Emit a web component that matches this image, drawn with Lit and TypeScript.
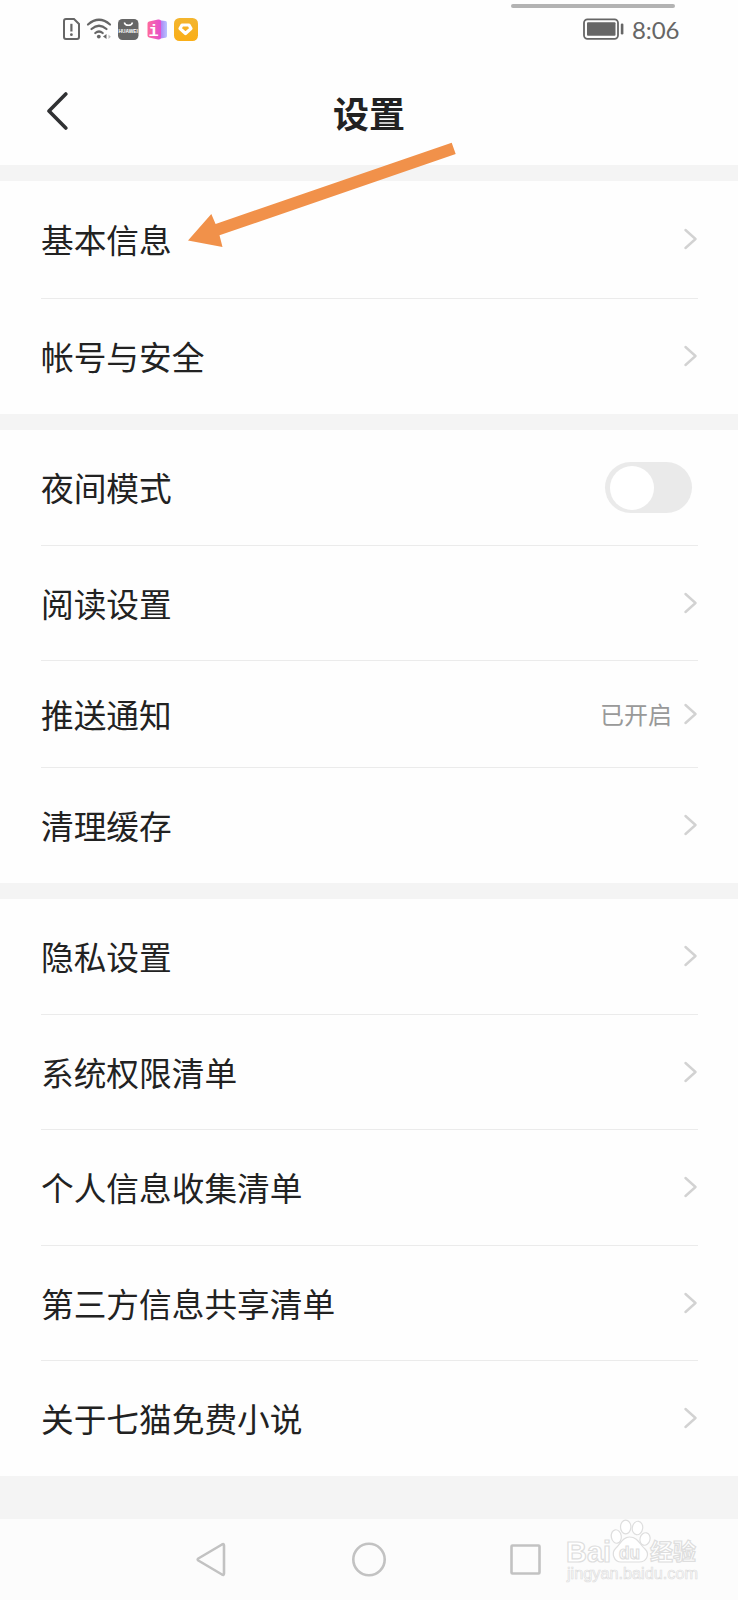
import { LitElement, html, css, nothing } from "lit";
import { customElement, property } from "lit/decorators.js";

@customElement("status-bar")
class StatusBar extends LitElement {
  static styles = css`
    :host { display: flex; justify-content: space-between; height: 60px; padding: 0 59px 0 62px; box-sizing: border-box; position: relative; }
    .handle { position: absolute; left: 511px; top: 4px; width: 164px; height: 4px; border-radius: 2px; background: #b3b3b3; }
    .icons { display: block; }
    .right { display: flex; gap: 8px; }
    .time { font: 400 24px/60px Lato, sans-serif; color: #666; width: 47px; white-space: nowrap; letter-spacing: -0.1px; }
    .brand { font: 700 5px "Liberation Sans", sans-serif; }
    .info { font: 700 17px "Liberation Mono", monospace; }
  `;
  render() {
    return html`
      <div class="handle"></div>
      <svg class="icons" width="140" height="60" viewBox="62 0 140 60">
        <defs>
          <linearGradient id="pink" x1="0" x2="1"><stop offset="0" stop-color="#ff6a9c" /><stop offset="1" stop-color="#e24fcf" /></linearGradient>
          <linearGradient id="violet" x1="0" x2="1"><stop offset="0" stop-color="#a45bef" /><stop offset="1" stop-color="#b7c5ff" /></linearGradient>
          <linearGradient id="gold" x1="0" x2="0" y1="0" y2="1"><stop offset="0" stop-color="#f3b52e" /><stop offset="1" stop-color="#faae17" /></linearGradient>
        </defs>
        <path d="M66 19H74L79 24V37a2 2 0 0 1-2 2H66a2 2 0 0 1-2-2V21a2 2 0 0 1 2-2Z" fill="none" stroke="#666" stroke-width="2" />
        <path d="M71.400 23.800V31.500" stroke="#666" stroke-width="2.200" />
        <circle cx="71.400" cy="34.700" r="1.400" fill="#666" />
        <g fill="none" stroke="#666" stroke-width="2.200" stroke-linecap="round">
          <path d="M88 24.500Q99 15 110 24.500" /><path d="M91.500 29Q99 22.500 106.500 29" /><path d="M95.300 33Q99 30 102.700 33" />
        </g>
        <circle cx="98.800" cy="36.600" r="1.900" fill="#666" />
        <path d="M106.500 34V39L103 36.500Z" fill="#666" /><path d="M108.500 34.500V39L110.800 36.700Z" fill="#bbb" />
        <rect x="118" y="19" width="20.500" height="21" rx="4.500" fill="#666" />
        <path d="M124.300 22.500a4.200 3.600 0 0 0 8.200 0" fill="none" stroke="#fff" stroke-width="1.500" />
        <text class="brand" x="118.600" y="33" textLength="19.300" lengthAdjust="spacingAndGlyphs" fill="#fff">HUAWEI</text>
        <path d="M157 20L165.500 21Q167 21.200 167 23V36Q167 37.500 165.500 37.700L157 39Z" fill="url(#violet)" />
        <path d="M149 21.500L158 19.500Q161 19 161 21.500V37.500Q161 40 158 39.500L149 37.500Q147.500 37.200 147.500 35.500V23.500Q147.500 22 149 21.500Z" fill="url(#pink)" />
        <text class="info" x="148.500" y="35.500" fill="#fff">i</text>
        <rect x="174" y="18" width="24" height="23" rx="5.500" fill="url(#gold)" />
        <path d="M182 25H189L191 28.500L185.500 33.500L180 28.500Z" fill="none" stroke="#fff" stroke-width="3.200" stroke-linejoin="round" />
      </svg>
      <div class="right">
        <svg width="41" height="60" viewBox="583.500 0 41 60">
          <rect x="584.500" y="19.300" width="34" height="19.500" rx="3.500" fill="none" stroke="#666" stroke-width="1.800" />
          <rect x="587.500" y="22.300" width="28.500" height="13.500" rx="1" fill="#666" />
          <rect x="621.300" y="23.500" width="2.600" height="11" rx="1.200" fill="#666" />
        </svg>
        <div class="time">8:06</div>
      </div>`;
  }
}

@customElement("setting-row")
class SettingRow extends LitElement {
  @property() label = "";
  @property() value = "";
  @property({ type: Boolean }) toggle = false;
  static styles = css`
    :host { display: flex; align-items: center; box-sizing: border-box; margin: 0 40px 0 41px; }
    .label { flex: 1; font-size: 32.7px; line-height: 48px; color: #222; padding-bottom: 1px; }
    .value { font-size: 24px; line-height: 36px; color: #999; margin-right: 12px; }
    .switch { width: 87px; height: 51px; border-radius: 26px; background: #eaeaea; margin-right: 6px; padding: 4px 5px; box-sizing: border-box; }
    .knob { width: 44px; height: 44px; border-radius: 50%; background: #fff; }
    .chevron { margin-right: 1px; padding-bottom: 1px; }
  `;
  render() {
    return html`
      <div class="label">${this.label}</div>
      ${this.value ? html`<div class="value">${this.value}</div>` : nothing}
      ${this.toggle
        ? html`<div class="switch"><div class="knob"></div></div>`
        : html`<svg class="chevron" width="13" height="22" viewBox="0 0 13 22"><path d="M1.500 2L11.500 11L1.500 20" fill="none" stroke="#d2d2d2" stroke-width="2.400" stroke-linecap="round" stroke-linejoin="round" /></svg>`}`;
  }
}

@customElement("nav-bar")
class NavBar extends LitElement {
  static styles = css`
    :host { display: flex; height: 81px; background: #fcfcfc; position: relative; }
    .mark { position: absolute; left: 560px; top: 0; }
    .latin { font: 700 29px "Liberation Sans", sans-serif; }
    .paw { font: 700 18px "Liberation Sans", sans-serif; }
    .han { font: 700 23px "Noto Sans CJK SC", sans-serif; }
    .url { font: 400 16px "Liberation Sans", sans-serif; }
  `;
  render() {
    return html`
      <svg width="738" height="81" viewBox="0 0 738 81" fill="none" stroke="#c2c2c2" stroke-width="2.600" stroke-linejoin="round">
        <path d="M198.300 39.500Q197 40.500 198.300 41.500L222 55.500Q224 56.500 224 54.500V26.500Q224 24.500 222 25.500Z" />
        <circle cx="369" cy="40.500" r="15.700" />
        <rect x="511.500" y="26.500" width="28" height="28" rx="1" />
      </svg>
      <svg class="mark" width="150" height="81" viewBox="560 0 150 81" fill="#fff" stroke="#dedede" stroke-width="1.200">
        <text class="latin" x="566" y="42.500" textLength="45" lengthAdjust="spacingAndGlyphs">Bai</text>
        <ellipse cx="616.300" cy="17.500" rx="5" ry="6.800" transform="rotate(-10 616.300 17.500)" />
        <ellipse cx="625.700" cy="8" rx="5.200" ry="6.800" />
        <ellipse cx="637.500" cy="9" rx="5.200" ry="6.800" transform="rotate(10 637.500 9)" />
        <ellipse cx="645" cy="20" rx="5" ry="6.300" transform="rotate(15 645 20)" />
        <path d="M629.500 18C622 18 620 26 615.500 29.500C611 34 614 43 621 43H639C647 43 650 35 645 30C640 26 638 18 629.500 18Z" />
        <text class="paw" x="619" y="40" textLength="21" lengthAdjust="spacingAndGlyphs">du</text>
        <text class="han" x="650" y="40.500" textLength="46" lengthAdjust="spacingAndGlyphs">经验</text>
        <text class="url" x="567" y="60" textLength="131" lengthAdjust="spacingAndGlyphs" stroke-width=".7">jingyan.baidu.com</text>
      </svg>`;
  }
}

interface Item { label: string; size: string; value?: string; toggle?: boolean }

const groups: Item[][] = [
  [{ label: "基本信息", size: "h118" }, { label: "帐号与安全", size: "h115" }],
  [
    { label: "夜间模式", size: "h116", toggle: true },
    { label: "阅读设置", size: "h115" },
    { label: "推送通知", size: "h107", value: "已开启" },
    { label: "清理缓存", size: "h115" },
  ],
  [
    { label: "隐私设置", size: "h116" },
    { label: "系统权限清单", size: "h115" },
    { label: "个人信息收集清单", size: "h116" },
    { label: "第三方信息共享清单", size: "h115" },
    { label: "关于七猫免费小说", size: "h115" },
  ],
];

@customElement("app-root")
class AppRoot extends LitElement {
  static styles = css`
    :host { display: flex; flex-direction: column; position: relative; width: 738px; height: 1600px; background: #f4f4f4; font-family: "Noto Sans CJK SC", sans-serif; overflow: hidden; }
    .top { background: #fefefe; height: 165px; flex: none; }
    .header { display: grid; grid-template-columns: 1fr auto 1fr; align-items: center; height: 105px; padding: 0 46px; }
    .back { display: block; padding-bottom: 3px; }
    .title { font-size: 36px; line-height: 54px; font-weight: 700; color: #222; padding-bottom: 1px; }
    .groups { display: flex; flex-direction: column; gap: 16px; padding-top: 16px; flex: 1; }
    .group { background: #fefefe; }
    .h107 { height: 107px; }
    .h115 { height: 115px; }
    .h116 { height: 116px; }
    .h118 { height: 118px; }
    .line { border-bottom: 1px solid #ebebeb; }
    .arrow { position: absolute; left: 180px; top: 135px; }
  `;
  render() {
    return html`
      <div class="top">
        <status-bar></status-bar>
        <div class="header">
          <svg class="back" width="23" height="38" viewBox="0 0 23 38"><path d="M19.800 2L3 19L19.800 36" fill="none" stroke="#303133" stroke-width="3.600" stroke-linecap="round" stroke-linejoin="round" /></svg>
          <div class="title">设置</div>
        </div>
      </div>
      <div class="groups">
        ${groups.map(
          (g) => html`<div class="group">
            ${g.map((i, n) => html`<setting-row class="${i.size} ${n < g.length - 1 ? "line" : ""}" .label=${i.label} .value=${i.value ?? ""} .toggle=${!!i.toggle}></setting-row>`)}
          </div>`
        )}
      </div>
      <nav-bar></nav-bar>
      <svg class="arrow" width="290" height="120" viewBox="180 135 290 120">
        <path d="M188 240.500L211.300 214L215.600 224L451.700 142.700L455.700 154L219.500 235.300L222.500 247Z" fill="#f1914a" />
      </svg>`;
  }
}
